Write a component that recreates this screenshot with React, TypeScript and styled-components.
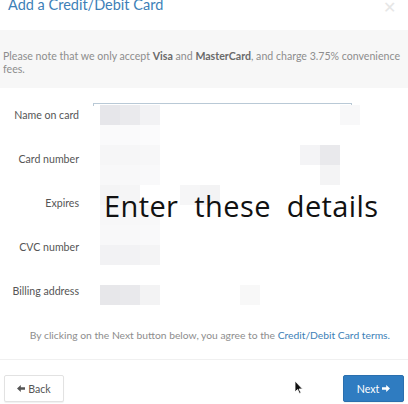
import styled, { createGlobalStyle } from "styled-components";

const Global = createGlobalStyle`
  html, body { margin: 0; padding: 0; background: #fff; }
  body { font-family: Lato, "Open Sans", sans-serif; overflow: hidden; }
`;

const Modal = styled.div`
  width: 408px;
  height: 404px;
  display: flex;
  flex-direction: column;
  background: #fff;
  overflow: hidden;
`;

const Header = styled.div`
  height: 30px;
  display: flex;
  justify-content: space-between;
  align-items: flex-start;
  padding: 0 12px 0 8px;
  box-sizing: border-box;
`;

const Title = styled.h3`
  margin: -5px 0 0;
  font-size: 14.5px;
  font-weight: 400;
  line-height: 20px;
  color: #3d7fb7;
`;

const Close = styled.span`
  margin-top: -3px;
  font-size: 16px;
  color: #e6e6e6;
  line-height: 20px;
`;

const Notice = styled.div`
  height: 58px;
  background: #f7f7f7;
  padding: 20px 6px 0 3px;
  box-sizing: border-box;
  font-size: 10.6px;
  line-height: 13px;
  color: #8d8d8d;
  b { color: #6a6a6a; font-weight: 700; }
`;

const Body = styled.div`
  position: relative;
  padding-top: 5px;
  height: 272px;
  box-sizing: border-box;
  border-bottom: 1px solid #f0f0f0;
`;

const InputLine = styled.div`
  position: absolute;
  left: 93px;
  top: 15px;
  width: 257px;
  height: 2px;
  border-top: 1px solid #b9c9d6;
  border-left: 1px solid #b9c9d6;
  border-right: 1px solid #b9c9d6;
`;

const Row = styled.div`
  height: 44px;
  display: grid;
  grid-template-columns: 80px 1fr;
  align-items: center;
`;

const Label = styled.label`
  text-align: right;
  font-size: 10.6px;
  color: #555;
  padding-right: 1px;
`;

const Cell = styled.div`
  position: absolute;
  width: 20px;
  height: 20px;
`;

const Overlay = styled.div`
  position: absolute;
  left: 104px;
  top: 98px;
  font-family: "Open Sans", "DejaVu Sans", sans-serif;
  font-size: 29px;
  color: #111;
  word-spacing: 8px;
  letter-spacing: 0.4px;
  white-space: nowrap;
`;

const Terms = styled.p`
  margin: 0;
  position: absolute;
  left: 0;
  right: 0;
  top: 241px;
  text-align: right;
  padding-right: 18px;
  font-size: 10.3px;
  color: #8d8d8d;
  a { color: #3d7fb7; text-decoration: none; }
`;

const Footer = styled.div`
  flex: 1;
  display: flex;
  justify-content: space-between;
  align-items: flex-start;
  padding: 15px 4px 0;
  position: relative;
`;

const Button = styled.button<{ $primary?: boolean }>`
  height: 27px;
  width: ${(p) => (p.$primary ? "61px" : "60px")};
  border-radius: 2px;
  font-family: Lato, sans-serif;
  font-size: 10.6px;
  display: flex;
  align-items: center;
  justify-content: center;
  gap: 3px;
  padding: 0;
  background: ${(p) => (p.$primary ? "#2f7cc1" : "#fff")};
  color: ${(p) => (p.$primary ? "#fff" : "#555")};
  border: 1px solid ${(p) => (p.$primary ? "#2a6fae" : "#e2e2e2")};
  box-shadow: 0 1px 1px rgba(0, 0, 0, 0.06);
`;

const Cursor = styled.svg`
  position: absolute;
  left: 294px;
  top: 20px;
`;

const Arrow = ({ dir }: { dir: "left" | "right" }) => (
  <svg width="8" height="7" viewBox="0 0 8 7" style={{ transform: dir === "left" ? "scaleX(-1)" : undefined }}>
    <path d="M0 2.3 H4.2 V0 L8 3.5 L4.2 7 V4.7 H0 Z" fill="currentColor" />
  </svg>
);

const cells: [number, number, string][] = [
  [100, 105, "#e6e6ea"], [120, 105, "#eaeaed"], [140, 105, "#f2f2f4"], [340, 105, "#f8f8f9"],
  [100, 125, "#fafafb"], [120, 125, "#fafafb"], [140, 125, "#fbfbfc"],
  [100, 145, "#f6f6f7"], [120, 145, "#f6f6f7"], [140, 145, "#f7f7f8"],
  [300, 145, "#f4f4f6"], [320, 145, "#e9e9ec"],
  [100, 165, "#f8f8f9"], [120, 165, "#f8f8f9"], [140, 165, "#f9f9fa"], [320, 165, "#f4f4f5"],
  [100, 185, "#f4f4f5"], [120, 185, "#f5f5f6"], [180, 185, "#f6f6f7"], [200, 185, "#f3f3f4"],
  [100, 205, "#f7f7f8"], [120, 205, "#f7f7f8"], [140, 205, "#f8f8f9"],
  [100, 225, "#f8f8f9"], [120, 225, "#f8f8f9"], [140, 225, "#f9f9fa"],
  [100, 245, "#f2f2f4"], [120, 245, "#f2f2f4"], [140, 245, "#f4f4f5"],
  [100, 285, "#e7e7ea"], [120, 285, "#e9e9ec"], [140, 285, "#f3f3f4"], [240, 285, "#f8f8f8"],
];

const labels = ["Name on card", "Card number", "Expires", "CVC number", "Billing address"];

export default function App() {
  return (
    <Modal>
      <Global />
      <Header>
        <Title>Add a Credit/Debit Card</Title>
        <Close>✕</Close>
      </Header>
      <Notice>
        Please note that we only accept <b>Visa</b> and <b>MasterCard</b>, and charge 3.75% convenience
        fees.
      </Notice>
      <Body>
        <InputLine />
        {labels.map((l) => (
          <Row key={l}>
            <Label>{l}</Label>
            <div />
          </Row>
        ))}
        {cells.map(([x, y, c], i) => (
          <Cell key={i} style={{ left: x, top: y - 88, background: c }} />
        ))}
        <Overlay>Enter these details</Overlay>
        <Terms>
          By clicking on the Next button below, you agree to the <a href="#">Credit/Debit Card terms.</a>
        </Terms>
      </Body>
      <Footer>
        <Button>
          <Arrow dir="left" />Back
        </Button>
        <Cursor width="10" height="14" viewBox="0 0 10 14">
          <path d="M1 1 L1 12 L3.5 9.5 L5.5 13.5 L7 12.8 L5 9 L8.5 9 Z" fill="#111" stroke="#fff" strokeWidth="0.8" />
        </Cursor>
        <Button $primary>
          Next<Arrow dir="right" />
        </Button>
      </Footer>
    </Modal>
  );
}
